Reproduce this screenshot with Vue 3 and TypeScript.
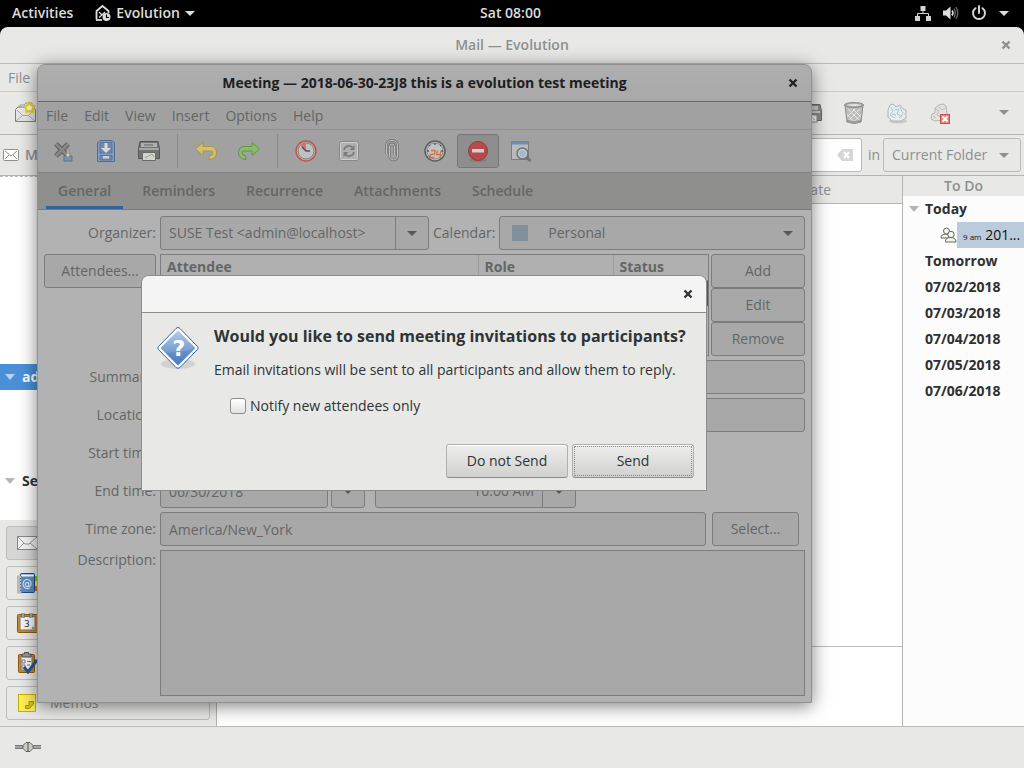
<script setup lang="ts">
import { ref } from 'vue'

interface NavItem { id: string; label: string }

const menus = ['File', 'Edit', 'View', 'Insert', 'Options', 'Help']
const tabs = ['General', 'Reminders', 'Recurrence', 'Attachments', 'Schedule']
const days = ['Tomorrow', '07/02/2018', '07/03/2018', '07/04/2018', '07/05/2018', '07/06/2018']
const sections: NavItem[] = [
  { id: 'mail', label: 'Mail' },
  { id: 'contacts', label: 'Contacts' },
  { id: 'calendar', label: 'Calendar' },
  { id: 'tasks', label: 'Tasks' },
  { id: 'memos', label: 'Memos' },
]

const activeTab = ref('General')
const newOnly = ref(false)
const organizer = ref('SUSE Test <admin@localhost>')
const summary = ref('')
const place = ref('')
const startDate = ref('06/30/2018')
const startTime = ref('9:00 AM')
const endDate = ref('06/30/2018')
const endTime = ref('10:00 AM')
const zone = ref('America/New_York')
const description = ref('')
</script>

<template>
  <div class="desktop">
    <header class="topbar">
      <div class="side">
        <button class="top-btn">Activities</button>
        <button class="top-btn app">
          <svg width="16" height="18" viewBox="0 0 16 18">
            <path d="M1.500 15.500V7L7.500 2L13.500 7V9" fill="none" stroke="#ddd" stroke-width="1.800" />
            <path d="M1 16H7" stroke="#ddd" stroke-width="1.800" />
            <path d="M4 8L7 11L4 13.500M7 11L10 8" fill="none" stroke="#ddd" stroke-width="1.300" />
            <circle cx="11.500" cy="13" r="4" fill="#ddd" />
            <path d="M11.500 10.500V13.500H14" fill="none" stroke="#000" stroke-width="1.200" />
          </svg>
          Evolution
          <svg width="10" height="5" viewBox="0 0 10 5"><path d="M0 0H10L5 5Z" fill="#ddd" /></svg>
        </button>
      </div>
      <button class="top-btn">Sat 08:00</button>
      <div class="side end">
        <button class="top-btn status" aria-label="System menu">
          <svg width="16" height="16" viewBox="0 0 16 16">
            <path d="M5.500 1h5v5h-5zM0 11h5v5H0zM11 11h5v5h-5z" fill="#d4d4d4" />
            <path d="M8 5V8.500M2.500 12V8.500H13.500V12" fill="none" stroke="#d4d4d4" />
          </svg>
          <svg width="16" height="16" viewBox="0 0 16 16">
            <path d="M0 5.500H3L7.500 1.500V14.500L3 10.500H0Z" fill="#ddd" />
            <path d="M9 5.500Q10.800 8 9 10.500" fill="none" stroke="#ddd" stroke-width="1.600" />
            <path d="M11 3.500Q13.500 8 11 12.500M13 2Q16.500 8 13 14" fill="none" stroke="#666" stroke-width="1.400" />
          </svg>
          <svg width="16" height="16" viewBox="0 0 16 16">
            <path d="M4.500 3.200A6 6 0 1 0 11.500 3.200M8 1V8" fill="none" stroke="#d4d4d4" stroke-width="2" stroke-linecap="round" />
          </svg>
          <svg width="10" height="5" viewBox="0 0 10 5"><path d="M0 0H10L5 5Z" fill="#ddd" /></svg>
        </button>
      </div>
    </header>

    <main class="mail">
      <div class="titlebar">
        <h1>Mail — Evolution</h1>
        <button class="close" aria-label="Close">
          <svg width="10" height="10" viewBox="0 0 10 10"><path d="M1.500 1.500L8.500 8.500M8.500 1.500L1.500 8.500" stroke="#8d9091" stroke-width="2.400" /></svg>
        </button>
      </div>
      <nav class="menubar"><button>File</button></nav>
      <div class="mail-tools">
        <button aria-label="New message">
          <svg width="22" height="22" viewBox="0 0 22 22">
            <path d="M5 8V4H9L11 2H17V10Z" fill="#f4f4f2" stroke="#999" />
            <path d="M0.500 8.500L3 6H17L20.500 8.500V20.500H0.500Z" fill="#e6e6e4" stroke="#80807e" />
            <path d="M1 20L7.500 14.500H13.500L20 20M2 9L7.500 14.500M19 9L13.500 14.500" fill="none" stroke="#aaa" />
            <path d="M14.500 1.500L16.200 4.300L19.500 5.200L17.500 8L17.600 11L14.500 10L11.400 11L11.500 8L9.500 5.200L12.800 4.300Z" fill="#fffbe0" stroke="#e6cf22" stroke-width="2" stroke-linejoin="round" />
          </svg>
        </button>
        <div class="right-tools">
          <button aria-label="Print">
            <svg width="22" height="22" viewBox="0 0 22 22">
              <path d="M2 2.500H20L21.500 9V18.500H0.500V9Z" fill="#8a8a8a" stroke="#666" />
              <path d="M4 4H18V8H4Z" fill="#ccc" /><path d="M2 10H20" stroke="#ccc" stroke-width="2" />
              <rect x="5" y="13" width="12" height="7" fill="#f5f5f5" stroke="#888" />
              <path d="M7 17L11 15L15 18" fill="none" stroke="#9cc5d5" />
            </svg>
          </button>
          <button aria-label="Delete">
            <svg width="22" height="24" viewBox="0 0 22 24">
              <path d="M2 4L4 21Q11 24 18 21L20 4Z" fill="#bdbdbb" stroke="#8c8c8c" />
              <path d="M5 8L17 20M4 13L11 21M10 8L18 16M17 8L5 20M18 13L11 21M12 8L4 16" stroke="#e4e4e4" />
              <ellipse cx="11" cy="4" rx="9.500" ry="2.500" fill="#aaa" stroke="#888" />
              <ellipse cx="11" cy="4" rx="7" ry="1.200" fill="#ddd" />
              <path d="M3.500 19.500Q11 23 18.500 19.500" fill="none" stroke="#999" stroke-width="2" />
            </svg>
          </button>
          <button aria-label="Junk">
            <svg width="22" height="22" viewBox="0 0 22 22">
              <ellipse cx="12" cy="19" rx="9" ry="2.500" fill="#c8c8c8" />
              <path d="M2 8L4 3L7 2L10 5L14 3L17 7L20 8L20 16L15 19L6 19L2 15Z" fill="#e8ecec" stroke="#aeb4b4" />
              <path d="M5 5L7 9L4 13L9 16M9 8L13 7L11 12L16 15M14 5L16 10L19 12" fill="none" stroke="#a4ced8" />
              <path d="M6 12L10 13M13 16L17 12" stroke="#bbb" />
            </svg>
          </button>
          <button aria-label="Not junk">
            <svg width="22" height="22" viewBox="0 0 22 22">
              <path d="M2 17L3 12L6 11L6 6L10 3L14 2L17 4L18 12L15 18L6 19Z" fill="#e2e2df" stroke="#b4b4b0" />
              <path d="M6 7L10 9L8 13L12 15M10 5L13 8L16 6M4 14L7 16" fill="none" stroke="#bcbcb8" />
              <rect x="11.500" y="12.500" width="9" height="9" fill="#e8837d" stroke="#c9504a" />
              <path d="M13.500 14.500L18.500 19.500M18.500 14.500L13.500 19.500" stroke="#fff" stroke-width="2" />
            </svg>
          </button>
          <button class="more" aria-label="More tools">
            <svg width="10" height="5" viewBox="0 0 10 5"><path d="M0 0H10L5 5Z" fill="#8d9091" /></svg>
          </button>
        </div>
      </div>
      <div class="search-row">
        <svg width="16" height="12" viewBox="0 0 16 12">
          <rect x="0.500" y="0.500" width="15" height="11" rx="1" fill="#fff" stroke="#8d9091" />
          <path d="M2 2L8 7L14 2M2 10L6 6M14 10L10 6" fill="none" stroke="#8d9091" />
        </svg>
        <span class="folder">Mail</span>
        <div class="search">
          <input type="text" aria-label="Search mail" />
          <button aria-label="Clear">
            <svg width="16" height="12" viewBox="0 0 16 12">
              <path d="M5 0H16V12H5L0 6Z" fill="#d5d7d4" /><path d="M7 3L12 9M12 3L7 9" stroke="#fff" stroke-width="2" />
            </svg>
          </button>
        </div>
        <label for="scope">in</label>
        <div class="scope pick">
          <select id="scope"><option>Current Folder</option></select>
          <svg width="10" height="5" viewBox="0 0 10 5"><path d="M0 0H10L5 5Z" fill="#8d9091" /></svg>
        </div>
      </div>

      <div class="content">
        <aside class="sidebar">
          <div class="tree">
            <div class="tree-row account">
              <svg width="10" height="6" viewBox="0 0 10 6"><path d="M0 0H10L5 6Z" fill="#b5d3f2" /></svg>admin
            </div>
            <div class="tree-row searches">
              <svg width="10" height="6" viewBox="0 0 10 6"><path d="M0 0H10L5 6Z" fill="#b4b4b4" /></svg>Search
            </div>
          </div>
          <nav class="switcher">
            <button v-for="s in sections" :key="s.id" :class="{ on: s.id === 'mail' }">
              <svg v-if="s.id === 'mail'" width="22" height="22" viewBox="0 0 22 22">
                <rect x="1.500" y="4.500" width="20" height="13" fill="#f3f3f1" stroke="#888" />
                <path d="M2 5L9 12H13L21 5M2 17L8 11M21 17L14 11" fill="none" stroke="#999" />
              </svg>
              <svg v-else-if="s.id === 'contacts'" width="22" height="22" viewBox="0 0 22 22">
                <path d="M18 4H21V9H18Z" fill="#73d216" /><path d="M18 9H22V14H18Z" fill="#fce94f" /><path d="M18 14H22V19H18Z" fill="#e07020" />
                <rect x="4.500" y="1.500" width="14" height="19" rx="1" fill="#5c8cc6" stroke="#204a87" />
                <path d="M5 3.500H18" stroke="#fff" stroke-width="2" />
                <text x="6" y="15" font-size="10" fill="#fff" font-family="DejaVu Sans, sans-serif">@</text>
                <path d="M1 5H6M1 8H6M1 11H6M1 14H6M1 17H6M1 20H6" stroke="#888" stroke-width="2.400" />
                <path d="M1 5H5M1 8H5M1 11H5M1 14H5M1 17H5M1 20H5" stroke="#eee" />
              </svg>
              <svg v-else-if="s.id === 'calendar'" width="22" height="22" viewBox="0 0 22 22">
                <rect x="1.500" y="2.500" width="20" height="18" rx="1" fill="#c88a32" stroke="#8f5902" />
                <rect x="4" y="4.500" width="15" height="13.500" fill="#f5f5f3" stroke="#777" />
                <text x="8" y="15" font-size="9" fill="#333" font-family="DejaVu Sans, sans-serif">3</text>
                <path d="M7 1V6M15 1V6" stroke="#666" stroke-width="3" /><path d="M7 1V6M15 1V6" stroke="#ddd" />
                <circle cx="17" cy="16" r="1.500" fill="#999" />
              </svg>
              <svg v-else-if="s.id === 'tasks'" width="22" height="22" viewBox="0 0 22 22">
                <rect x="2.500" y="2.500" width="16" height="18" rx="1" fill="#c88a32" stroke="#8f5902" />
                <rect x="5" y="4" width="11" height="14" fill="#f5f5f3" stroke="#777" />
                <path d="M6 5V2H8.500V0.500H12.500V2H15V5Z" fill="#999" stroke="#555" />
                <path d="M6 8H9V11H6ZM6 13H9V16H6ZM11 9.500H15M11 13H14" fill="none" stroke="#777" />
                <path d="M8 15L12 20L21 8" fill="none" stroke="#2a5593" stroke-width="3" />
              </svg>
              <svg v-else width="22" height="22" viewBox="0 0 22 22">
                <rect x="2.500" y="2.500" width="17" height="17" fill="#fbee55" stroke="#c4b000" />
                <path d="M10 17V14H13L13 10L17 9V12L14 16Z" fill="#d8bf20" /><path d="M9.500 16.500V13.500H13V9.500H17.500V12L13.500 16.500Z" fill="none" stroke="#a89010" />
              </svg>
              {{ s.label }}
            </button>
          </nav>
        </aside>
        <section class="messages">
          <div class="list-head">Date</div>
          <div class="list"></div>
          <div class="preview"></div>
        </section>
        <aside class="todo">
          <h2>To Do</h2>
          <ul>
            <li class="today"><svg width="10" height="6" viewBox="0 0 10 6"><path d="M0 0H10L5 6Z" fill="#b4b4b4" /></svg>Today</li>
            <li class="event">
              <svg width="17" height="16" viewBox="0 0 17 16">
                <g fill="#f3f3ef" stroke="#66665f"><path d="M1 11Q1 7 6 7Q9 7 10 11Z" /><circle cx="6.500" cy="4" r="3" /><path d="M5.500 15Q5 10.500 10.500 10.500Q16 10.500 16 15Z" /><circle cx="11" cy="7.500" r="3.200" /></g>
              </svg>
              <span class="event-label"><small>9 am</small> 201...</span>
            </li>
            <li v-for="d in days" :key="d" class="day">{{ d }}</li>
          </ul>
        </aside>
      </div>
      <footer class="statusbar">
        <svg width="28" height="12" viewBox="0 0 28 12">
          <path d="M1 6H27" stroke="#777" stroke-width="4" /><path d="M1 6H27" stroke="#b5b5b0" stroke-width="1.500" />
          <path d="M9 4.500L12 1.500H16L19 4.500V7.500L16 10.500H12L9 7.500Z" fill="#c9c9c4" stroke="#66665f" /><path d="M14 1V11" stroke="#55554f" />
        </svg>
      </footer>
    </main>

    <section class="meeting" aria-label="Meeting">
      <div class="titlebar">
        <h1>Meeting — 2018-06-30-23J8 this is a evolution test meeting</h1>
        <button class="close" aria-label="Close">
          <svg width="10" height="10" viewBox="0 0 10 10"><path d="M1.500 1.500L8.500 8.500M8.500 1.500L1.500 8.500" stroke="#202426" stroke-width="2.400" /></svg>
        </button>
      </div>
      <nav class="menubar"><button v-for="m in menus" :key="m">{{ m }}</button></nav>
      <div class="tools">
        <button aria-label="Save and close">
          <svg width="22" height="22" viewBox="0 0 22 22">
            <path d="M4 4L16 16M16 4L4 16" stroke="#333" stroke-width="5" /><path d="M4 4L16 16M16 4L4 16" stroke="#777" stroke-width="3" />
            <path d="M12 16H20V21H12Z" fill="#5a8ac4" stroke="#456" /><path d="M15 9H17V14H19L16 18L13 14H15Z" fill="#eee" stroke="#777" />
          </svg>
        </button>
        <button aria-label="Save">
          <svg width="22" height="24" viewBox="0 0 22 24">
            <path d="M2.500 22.500V4L5 1.500H17L19.500 4V22.500Z" fill="#6f9bd6" stroke="#204a87" />
            <path d="M5 3.500H17V14H5ZM5 16.500H17V21H5Z" fill="#4f7cb8" stroke="#2d5797" />
            <path d="M9.500 4H12.500V9H16L11 14L6 9H9.500Z" fill="#fff" /><path d="M8 17H14V19.500H8Z" fill="#eee" />
          </svg>
        </button>
        <button aria-label="Print">
          <svg width="24" height="22" viewBox="0 0 24 22">
            <path d="M3 1.500H21L22.500 9V18.500H1.500V9Z" fill="#555" stroke="#222" />
            <path d="M4 3H20V7H4Z" fill="#bbb" /><path d="M7 5H16" stroke="#333" /><path d="M2 9H22" stroke="#aaa" stroke-width="2" />
            <path d="M5.500 12.500H18.500V20.500H5.500Z" fill="#f4f4f4" stroke="#444" /><path d="M8 18L15 14L17 17" fill="none" stroke="#7ab050" />
          </svg>
        </button>
        <span class="sep"></span>
        <button aria-label="Undo">
          <svg width="24" height="20" viewBox="0 0 24 20">
            <path d="M1.500 8L9 1.500V5.500H17Q22.500 6 22.500 12Q22 18 15 18.500V15Q19 14.500 19 12Q19 9.500 16.500 10H9V14.500Z" fill="#edd958" stroke="#b58a05" stroke-linejoin="round" />
          </svg>
        </button>
        <button aria-label="Redo">
          <svg width="24" height="20" viewBox="0 0 24 20">
            <path d="M22.500 8L15 1.500V5.500H7Q1.500 6 1.500 12Q2 18 9 18.500V15Q5 14.500 5 12Q5 9.500 7.500 10H15V14.500Z" fill="#7ecb4a" stroke="#3f8a10" stroke-linejoin="round" />
          </svg>
        </button>
        <span class="sep"></span>
        <button aria-label="Alarm">
          <svg width="24" height="24" viewBox="0 0 24 24">
            <circle cx="12" cy="12" r="10" fill="#bbb" stroke="#e02020" stroke-width="1.500" /><circle cx="12" cy="12" r="8" fill="#d6d6d6" stroke="#777" />
            <path d="M12 12L6 6Q9 4 12 4Z" fill="#e55" /><path d="M8 8L12 12H16" fill="none" stroke="#222" stroke-width="1.500" />
          </svg>
        </button>
        <button aria-label="Recurring">
          <svg width="20" height="20" viewBox="0 0 20 20">
            <rect x="0.500" y="0.500" width="19" height="19" rx="2" fill="#bbb" stroke="#777" /><rect x="1.500" y="1.500" width="17" height="17" rx="1" fill="none" stroke="#eee" />
            <path d="M5 9A5 5 0 0 1 14 7M15 11A5 5 0 0 1 6 13" fill="none" stroke="#666" stroke-width="1.800" /><path d="M15.500 4V9H10.500ZM4.500 16V11H9.500Z" fill="#666" />
          </svg>
        </button>
        <button aria-label="Attach">
          <svg width="14" height="24" viewBox="0 0 14 24">
            <path d="M1.500 15V6Q1.500 1.500 7 1.500Q12.500 1.500 12.500 6V17Q12.500 21 8.500 21Q4.500 21 4.500 17V8Q4.500 5 7 5Q9.500 5 9.500 8V16" fill="none" stroke="#555" stroke-width="2.400" />
            <path d="M1.500 15V6Q1.500 1.500 7 1.500Q12.500 1.500 12.500 6V17Q12.500 21 8.500 21Q4.500 21 4.500 17V8Q4.500 5 7 5Q9.500 5 9.500 8V16" fill="none" stroke="#d4d4d4" />
          </svg>
        </button>
        <button aria-label="All day event">
          <svg width="24" height="24" viewBox="0 0 24 24">
            <circle cx="12" cy="12" r="10" fill="#ccc" stroke="#333" stroke-width="1.500" /><circle cx="12" cy="12" r="8" fill="#d8d8d8" stroke="#888" />
            <path d="M12 4V6M4 12H6M18 12H20M6 6L7 7M18 6L17 7M7 17L6 18" stroke="#222" stroke-width="1.300" />
            <path d="M8 11.500H12L11.500 15L7.500 15.500L7 18.500H11.500M14.500 11.500L13.500 15.500H18M18 11.500L17 19" fill="none" stroke="#e8590c" stroke-width="1.300" />
          </svg>
        </button>
        <button class="pressed" aria-label="Show as busy" aria-pressed="true">
          <svg width="22" height="24" viewBox="0 0 22 24">
            <ellipse cx="11" cy="21" rx="9" ry="2" fill="#777" /><circle cx="11" cy="12" r="9.500" fill="#d31f1f" stroke="#a40000" /><path d="M5 10H17V13.500H5Z" fill="#fff" />
          </svg>
        </button>
        <button aria-label="Free/busy">
          <svg width="22" height="22" viewBox="0 0 22 22">
            <rect x="1.500" y="1.500" width="17" height="18" fill="#ccc" stroke="#666" /><path d="M2 3H18" stroke="#4a7fc0" stroke-width="3" />
            <path d="M16 17L20.500 21" stroke="#555" stroke-width="3" /><circle cx="12.500" cy="13.500" r="5.500" fill="#a8c8ea" stroke="#555" stroke-width="1.500" /><circle cx="12.500" cy="13.500" r="4" fill="none" stroke="#eee" />
          </svg>
        </button>
      </div>
      <div class="tabs" role="tablist">
        <button v-for="t in tabs" :key="t" role="tab" :aria-selected="t === activeTab" :class="{ on: t === activeTab }" @click="activeTab = t">{{ t }}</button>
      </div>

      <form class="form" @submit.prevent>
        <label for="organizer">Organizer:</label>
        <div class="row">
          <div class="combo organizer">
            <input id="organizer" v-model="organizer" type="text" />
            <button type="button" aria-label="Choose organizer"><svg width="10" height="5" viewBox="0 0 10 5"><path d="M0 0H10L5 5Z" fill="#555858" /></svg></button>
          </div>
          <label for="calendar">Calendar:</label>
          <div class="pick calendar">
            <span class="swatch"></span>
            <select id="calendar"><option>Personal</option></select>
            <svg width="10" height="5" viewBox="0 0 10 5"><path d="M0 0H10L5 5Z" fill="#555858" /></svg>
          </div>
        </div>

        <button type="button" class="btn">Attendees...</button>
        <div class="row attendees">
          <div class="table-box">
            <table>
              <thead><tr><th>Attendee</th><th>Role</th><th>Status</th></tr></thead>
              <tbody><tr><td></td><td></td><td></td></tr></tbody>
            </table>
          </div>
          <div class="stack">
            <button type="button" class="btn">Add</button>
            <button type="button" class="btn">Edit</button>
            <button type="button" class="btn">Remove</button>
          </div>
        </div>

        <label for="summary">Summary:</label>
        <input id="summary" v-model="summary" class="entry" type="text" />
        <label for="place">Location:</label>
        <input id="place" v-model="place" class="entry" type="text" />

        <label for="start">Start time:</label>
        <div class="row times">
          <input id="start" v-model="startDate" class="entry date" type="text" />
          <button type="button" class="btn drop" aria-label="Start date"><svg width="10" height="5" viewBox="0 0 10 5"><path d="M0 0H10L5 5Z" fill="#555858" /></svg></button>
          <div class="combo time">
            <input v-model="startTime" type="text" aria-label="Start hour" />
            <button type="button" aria-label="Pick start hour"><svg width="10" height="5" viewBox="0 0 10 5"><path d="M0 0H10L5 5Z" fill="#555858" /></svg></button>
          </div>
        </div>
        <label for="end">End time:</label>
        <div class="row times">
          <input id="end" v-model="endDate" class="entry date" type="text" />
          <button type="button" class="btn drop" aria-label="End date"><svg width="10" height="5" viewBox="0 0 10 5"><path d="M0 0H10L5 5Z" fill="#555858" /></svg></button>
          <div class="combo time">
            <input v-model="endTime" type="text" aria-label="End hour" />
            <button type="button" aria-label="Pick end hour"><svg width="10" height="5" viewBox="0 0 10 5"><path d="M0 0H10L5 5Z" fill="#555858" /></svg></button>
          </div>
        </div>

        <label for="zone">Time zone:</label>
        <div class="row zone">
          <input id="zone" v-model="zone" class="entry" type="text" />
          <button type="button" class="btn">Select...</button>
        </div>
        <label for="description" class="top">Description:</label>
        <textarea id="description" v-model="description"></textarea>
      </form>
    </section>

    <div class="dialog" role="dialog" aria-labelledby="ask">
      <div class="titlebar">
        <button class="close" aria-label="Close">
          <svg width="10" height="10" viewBox="0 0 10 10"><path d="M1.500 1.500L8.500 8.500M8.500 1.500L1.500 8.500" stroke="#2e3436" stroke-width="2.400" /></svg>
        </button>
      </div>
      <div class="dialog-body">
        <svg width="44" height="48" viewBox="0 -1 44 48">
          <defs>
            <linearGradient id="blue" x1="0" y1="0" x2="0" y2="1"><stop offset="0" stop-color="#b4cce8" /><stop offset="1" stop-color="#4a7fc0" /></linearGradient>
          </defs>
          <ellipse cx="22" cy="38" rx="17" ry="5" fill="#d2d2d0" />
          <path d="M22 1.500Q23 1.500 24 2.500L41.500 20.500Q43 22 41.500 23.500L24 41.500Q22 43 20 41.500L2.500 23.500Q1 22 2.500 20.500L20 2.500Q21 1.500 22 1.500Z" fill="#fff" stroke="#3465a4" />
          <path d="M22 4.500L39.500 22L22 39.500L4.500 22Z" fill="url(#blue)" />
          <path d="M4.500 22L22 39.500L39.500 22Q30 26 9 27Z" fill="#3f74b5" opacity="0.300" />
          <text x="23" y="30" text-anchor="middle" font-size="22" font-weight="700" fill="#fff" font-family="DejaVu Sans, sans-serif">?</text>
        </svg>
        <div class="message">
          <h2 id="ask">Would you like to send meeting invitations to participants?</h2>
          <p>Email invitations will be sent to all participants and allow them to reply.</p>
          <label><input v-model="newOnly" type="checkbox" />Notify new attendees only</label>
        </div>
      </div>
      <div class="actions">
        <button>Do not Send</button>
        <button class="focus">Send</button>
      </div>
    </div>
  </div>
</template>

<style>
body { margin: 0; background: #000; }
</style>

<style scoped>
.desktop, .desktop * { box-sizing: border-box; }
.desktop {
  position: relative;
  display: flex;
  flex-direction: column;
  min-height: 100vh;
  overflow: hidden;
  font: 14px/20px "Open Sans", "Noto Sans", sans-serif;
  color: #2e3436;
}
button, input, select, textarea { font: inherit; color: inherit; margin: 0; }
button { border: 0; padding: 0; background: none; display: flex; align-items: center; justify-content: center; }
h1, h2, p, ul { margin: 0; padding: 0; font-size: inherit; list-style: none; }
svg { flex: none; display: block; }

.topbar { display: flex; align-items: center; height: 27px; padding-bottom: 1px; background: #000; color: #ddd; font-weight: 600; }
.side { flex: 1; display: flex; padding: 0 12px; gap: 22px; }
.side.end { justify-content: flex-end; padding-right: 15px; }
.app { gap: 5px; }
.status { gap: 12px; }

.mail { flex: 1; display: flex; flex-direction: column; background: #e8e8e6; border-radius: 8px 8px 0 0; color: #8d9091; }
.titlebar { display: flex; align-items: center; height: 37px; padding: 0 13px; border-bottom: 1px solid #bcbcba; }
.titlebar h1 { flex: 1; text-align: center; font-weight: 700; padding-left: 10px; }
.mail > .titlebar h1 { font-weight: 600; }
.menubar { display: flex; height: 28px; border-bottom: 1px solid #cbcbc9; }
.menubar button { padding: 0 8px; }
.mail-tools { display: flex; align-items: center; height: 43px; padding: 0 15px; border-bottom: 1px solid #b4b4b2; }
.mail-tools > button { padding-bottom: 2px; }
.right-tools { display: flex; align-items: center; gap: 21px; margin-left: auto; padding-bottom: 1px; }
.more { padding-left: 27px; }
.search-row { display: flex; align-items: center; height: 41px; gap: 6px; padding: 0 3px; border-bottom: 1px solid #b4b4b2; }
.folder { font-weight: 600; }
.search { flex: 1; display: flex; height: 34px; padding: 0 8px; border: 1px solid #b9b9b7; border-radius: 3px; background: #fff; margin-left: 100px; }
.search input { flex: 1; border: 0; outline: 0; background: none; min-width: 0; }
.pick { position: relative; display: flex; align-items: center; height: 34px; border: 1px solid #b9b9b7; border-radius: 3px; }
.pick select { flex: 1; align-self: stretch; width: 100%; appearance: none; border: 0; background: none; padding: 0 30px 0 8px; }
.pick > svg { position: absolute; right: 11px; pointer-events: none; }
.scope { width: 138px; margin-left: -3px; }

.content { flex: 1; display: flex; background: #fff; }
.sidebar { width: 217px; display: flex; flex-direction: column; border-right: 1px solid #b4b4b2; }
.tree { flex: 1; padding-top: 187px; border-top: 1px dashed #bbb; }
.tree-row { display: flex; align-items: center; height: 26px; padding-left: 5px; gap: 7px; font-weight: 700; color: #2e3436; }
.account { background: #4a90d9; color: #fff; }
.searches { margin-top: 78px; }
.switcher { display: grid; gap: 6px; padding: 6px; background: #e8e8e6; }
.switcher button { height: 34px; justify-content: flex-start; gap: 12px; padding-left: 9px; border: 1px solid #bdbdbb; border-radius: 3px; }
.switcher .on { background: #d6d6d6; }
.messages { flex: 1; display: flex; flex-direction: column; }
.list-head { height: 28px; padding: 4px 71px 4px 0; background: #e8e8e6; border-bottom: 1px solid #b4b4b2; text-align: right; }
.list { flex: 1; }
.preview { height: 80px; border-top: 1px solid #bcbcba; }
.todo { width: 122px; border-left: 1px solid #b4b4b2; background: #fcfcfc; }
.todo h2 { height: 20px; background: #e8e8e6; text-align: center; font-weight: 600; }
.todo li { height: 26px; display: flex; align-items: center; font-weight: 700; color: #303030; }
.todo .today { padding-left: 6px; gap: 6px; }
.todo .day { padding-left: 22px; }
.todo .event { justify-content: flex-end; font-weight: 400; }
.event-label { width: 67px; height: 26px; line-height: 26px; padding-left: 6px; background: #bccbdc; color: #111; white-space: nowrap; }
.event-label small { font-size: 8px; }
.statusbar { height: 42px; padding: 14px; border-top: 1px solid #bcbcba; }

.meeting {
  position: absolute;
  left: 37px;
  top: 64px;
  width: 775px;
  border: 1px solid #8f8f8f;
  border-radius: 8px 8px 0 0;
  background: #b2b2b2;
  color: #646666;
  box-shadow: 0 3px 18px rgba(0, 0, 0, 0.5);
}
.meeting .titlebar { background: linear-gradient(#aeaeae, #a9a9a9); border-radius: 7px 7px 0 0; border-color: #666; color: #1d2022; }
.meeting .menubar { background: #a1a1a1; border-color: #8e8e8e; }
.tools { display: flex; align-items: center; height: 43px; gap: 1px; padding-left: 4px; background: #a1a1a1; border-bottom: 1px solid #7f7f7f; }
.tools button { width: 42px; height: 34px; border-radius: 3px; }
.tools svg { opacity: 0.6; }
.tools .pressed { background: #8e8e8e; border: 1px solid #767676; }
.sep { width: 1px; height: 34px; margin: 0 6px; background: #888; }
.tabs { display: flex; height: 37px; gap: 7px; padding: 0 8px; background: #8f8f8d; border-bottom: 1px solid #7b7b7b; font-weight: 600; }
.tabs button { padding: 0 12px; border-bottom: 3px solid transparent; border-top: 3px solid transparent; }
.tabs .on { border-bottom-color: #2e6299; }

.form { display: grid; grid-template-columns: 112px 1fr; gap: 4px; padding: 6px; }
.form > label { text-align: right; align-self: center; }
.form > .top { align-self: start; }
.row { display: flex; align-items: center; gap: 4px; min-width: 0; }
.btn, .entry, .combo, textarea, .meeting .pick { background: #a8a8a8; border: 1px solid #7c7c7c; border-radius: 3px; height: 34px; }
.btn { align-self: start; }
.entry { padding: 0 8px; width: 100%; min-width: 0; }
.combo { display: flex; }
.combo input { flex: 1; min-width: 0; border: 0; outline: 0; background: none; padding: 0 8px; }
.combo button { width: 33px; border-left: 1px solid #7c7c7c; }
.organizer { width: 269px; }
.calendar { flex: 1; }
.swatch { width: 16px; height: 16px; margin-left: 12px; background: #7f8f9b; }
.calendar .swatch + select { padding-left: 20px; }
.attendees { align-items: stretch; gap: 2px; }
.table-box { flex: 1; border: 1px solid #7c7c7c; height: 102px; background: #b0b0b0; }
table { width: 100%; border-collapse: collapse; table-layout: fixed; }
th { height: 25px; padding: 0 6px; text-align: left; border-left: 1px solid #9c9c9c; border-bottom: 1px solid #8a8a8a; font-weight: 700; }
th:first-child { border-left: 0; }
th:nth-child(2) { width: 135px; }
th:nth-child(3) { width: 95px; }
td { height: 26px; padding: 0; background: #2b5f98; }
.stack { width: 94px; display: grid; }
.stack .btn, .form > .btn { width: 100%; }
.times { gap: 3px; }
.times .date { width: 168px; }
.drop { width: 34px; }
.time { width: 201px; margin-left: 7px; }
.time input { text-align: right; }
.zone { gap: 6px; padding-right: 6px; }
.zone .entry { flex: 1; }
.zone .btn { width: 87px; }
textarea { width: 100%; height: 146px; border-radius: 0; resize: none; display: block; }

.dialog {
  position: absolute;
  left: 141px;
  top: 275px;
  width: 566px;
  border: 1px solid #8c8c8a;
  border-radius: 8px 8px 0 0;
  background: #e8e8e6;
}
.dialog .titlebar { justify-content: flex-end; background: #f4f4f4; border-color: #8c8c8a; border-radius: 7px 7px 0 0; }
.dialog-body { display: flex; gap: 14px; padding: 12px 14px 0; }
.message h2 { font-size: 16px; line-height: 22px; font-weight: 700; white-space: nowrap; }
.message p { margin-top: 13px; }
.message label { display: flex; align-items: center; gap: 4px; margin: 16px 0 0 16px; }
.message input { appearance: none; width: 16px; height: 16px; border: 1px solid #8e8e88; border-radius: 3px; background: linear-gradient(#fff, #e2e2e0); }
.actions { display: flex; justify-content: flex-end; gap: 4px; padding: 28px 12px 12px; }
.actions button { width: 122px; height: 34px; border: 1px solid #b0b0ae; border-bottom-color: #8c8c88; border-radius: 3px; background: linear-gradient(#eeeeec, #d0d0ce); box-shadow: inset 0 1px #fff; }
.actions .focus { outline: 1px dotted #888; outline-offset: -3px; }
</style>
